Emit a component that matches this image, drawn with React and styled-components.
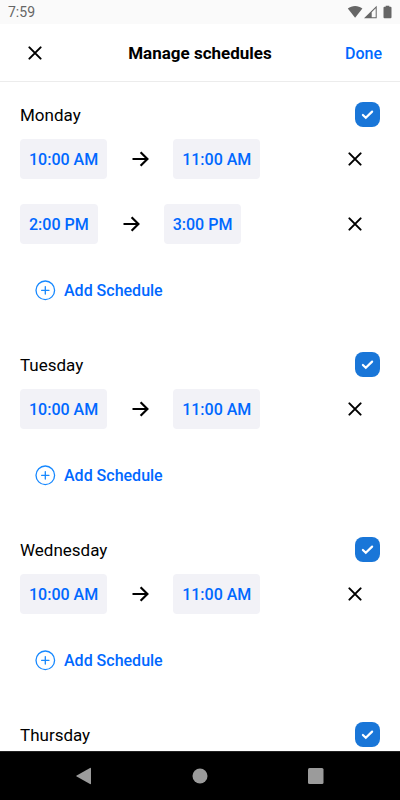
import React, { useState } from 'react';
import styled, { createGlobalStyle } from 'styled-components';


const GlobalStyle = createGlobalStyle`
    * {
        box-sizing: border-box;
    }
    body {
        margin: 0;
        background-color: #ffffff;
        font-family: Roboto, "Liberation Sans", sans-serif;
        color: #000000;
    }
    button {
        font-family: inherit;
        border: none;
        background: none;
        padding: 0;
        cursor: pointer;
    }
    svg {
        display: block;
    }
    `
const Screen = styled.div`
    height: 100vh;
    display: flex;
    flex-direction: column;
    `
const StatusBar = styled.div`
    flex: none;
    height: 24px;
    padding: 0 7px 0 8px;
    display: flex;
    align-items: center;
    justify-content: space-between;
    background-color: #fafafa;
    color: #666666;
    font-size: 14px;
    line-height: 28px;
    `
const Header = styled.header`
    flex: none;
    height: 58px;
    padding: 0 18px 0 24px;
    display: grid;
    grid-template-columns: 1fr auto 1fr;
    align-items: center;
    border-bottom: 1px solid #ececec;
    `
const Title = styled.h1`
    margin: 0;
    padding-right: 6px;
    font-size: 17px;
    font-weight: 700;
    line-height: 24px;
    `
const DoneButton = styled.button`
    justify-self: end;
    padding-top: 2px;
    color: #0068ff;
    font-size: 16px;
    font-weight: 500;
    line-height: 24px;
    `
const IconButton = styled.button`
    width: 22px;
    height: 24px;
    display: flex;
    align-items: center;
    justify-content: center;
    color: #000000;
    `
const DayList = styled.main`
    flex: 1;
    min-height: 0;
    padding-top: 20px;
    overflow-y: auto;
    scrollbar-width: none;
    `
const Day = styled.section`
    padding: 0 20px 41px;
    `
const DayLabel = styled.label`
    height: 25px;
    margin-bottom: 12px;
    display: flex;
    align-items: center;
    justify-content: space-between;
    font-size: 17px;
    line-height: 26px;
    `
const CheckBox = styled.span`
    display: grid;
    width: 25px;
    height: 25px;
    border-radius: 8px;
    background-color: ${props => props.$on ? '#1976d8' : '#f2f2f7'};
    color: #ffffff;

    > * {
        grid-area: 1 / 1;
        place-self: center;
    }
    `
const CheckInput = styled.input`
    appearance: none;
    width: 100%;
    height: 100%;
    margin: 0;
    border-radius: 8px;
    cursor: pointer;
    `
const Row = styled.div`
    height: 40px;
    margin-bottom: 25px;
    padding-right: 14px;
    display: flex;
    align-items: center;
    justify-content: space-between;
    `
const Range = styled.div`
    display: flex;
    align-items: center;
    gap: 24px;
    `
const TimeButton = styled.button`
    height: 40px;
    padding: 2px 9px 0;
    border-radius: 4px;
    background-color: #f2f2f7;
    color: #0068ff;
    font-size: 16px;
    font-weight: 500;
    line-height: 24px;
    white-space: nowrap;
    `
const AddButton = styled.button`
    height: 42px;
    margin-left: 15px;
    display: flex;
    align-items: center;
    gap: 8px;
    color: #0068ff;
    font-size: 16px;
    font-weight: 500;
    line-height: 24px;
    `
const AddText = styled.span`
    padding-top: 2px;
    `
const NavBar = styled.nav`
    flex: none;
    height: 49px;
    padding: 0 26px;
    display: grid;
    grid-template-columns: repeat(3, 1fr);
    justify-items: center;
    background-color: #000000;
    border-top: 1px solid #222222;
    color: #9b9b9b;
    `
const NavButton = styled.button`
    color: inherit;
    `


const schedules = [
    { day: 'Monday', times: [['10:00 AM', '11:00 AM'], ['2:00 PM', '3:00 PM']] },
    { day: 'Tuesday', times: [['10:00 AM', '11:00 AM']] },
    { day: 'Wednesday', times: [['10:00 AM', '11:00 AM']] },
    { day: 'Thursday', times: [] },
]

const CloseIcon = () => (
    <svg width="14" height="14" viewBox="0 0 14 14" fill="none" stroke="currentColor" strokeWidth="2" strokeLinecap="round">
        <path d="M1.4 1.4 12.6 12.6M12.6 1.4 1.4 12.6" />
    </svg>
)

const ArrowIcon = () => (
    <svg width="18" height="18" viewBox="0 0 18 18" fill="none" stroke="currentColor" strokeWidth="2.2">
        <path d="M1.5 9H16.5M9.6 2.2 16.4 9 9.6 15.8" />
    </svg>
)

const CheckIcon = () => (
    <svg width="13" height="10" viewBox="0 0 13 10" fill="none" stroke="currentColor" strokeWidth="2.2" strokeLinecap="round" pointerEvents="none">
        <path d="M1.9 5 4.8 7.8 11.1 1.6" />
    </svg>
)

const PlusIcon = () => (
    <svg width="21" height="21" viewBox="0 0 21 21" fill="none" stroke="#1688ff" strokeWidth="1.3" strokeLinecap="round">
        <circle cx="10.3" cy="10.3" r="9.3" />
        <path d="M10.3 6.6V14M6.6 10.3H14" />
    </svg>
)

const StatusIcons = () => (
    <svg width="46" height="14" viewBox="0 0 46 14" fill="currentColor">
        <path d="M0.8 3.6C5 0 11.2 0 15.4 3.6L8.1 12.8Z" />
        <path fillRule="evenodd" d="M29.7 0.7V13.3H17ZM28.7 3.2 24.7 7.2V12.3H28.7Z" />
        <path d="M38.7 1.8V0.8H42.3V1.8H43.5Q44.5 1.8 44.5 2.8V12.2Q44.5 13.2 43.5 13.2H37.5Q36.5 13.2 36.5 12.2V2.8Q36.5 1.8 37.5 1.8Z" />
    </svg>
)


const DaySection = ({ day, times }) => {
    const [on, setOn] = useState(true)

    return (
        <Day>
            <DayLabel>
                {day}
                <CheckBox $on={on}>
                    <CheckInput type="checkbox" checked={on} onChange={e => setOn(e.target.checked)} />
                    {on && <CheckIcon />}
                </CheckBox>
            </DayLabel>
            {times.map(([start, end]) => (
                <Row key={start}>
                    <Range>
                        <TimeButton>{start}</TimeButton>
                        <ArrowIcon />
                        <TimeButton>{end}</TimeButton>
                    </Range>
                    <IconButton aria-label="Remove"><CloseIcon /></IconButton>
                </Row>
            ))}
            {times.length > 0 && (
                <AddButton>
                    <PlusIcon />
                    <AddText>Add Schedule</AddText>
                </AddButton>
            )}
        </Day>
    )
}

export default function App() {
    return (
        <>
            <GlobalStyle />
            <Screen>
                <StatusBar>
                    <span>7:59</span>
                    <StatusIcons />
                </StatusBar>
                <Header>
                    <IconButton aria-label="Close"><CloseIcon /></IconButton>
                    <Title>Manage schedules</Title>
                    <DoneButton>Done</DoneButton>
                </Header>
                <DayList>
                    {schedules.map(item => <DaySection key={item.day} {...item} />)}
                </DayList>
                <NavBar>
                    <NavButton aria-label="Back">
                        <svg width="16" height="18" viewBox="0 0 16 18" fill="currentColor">
                            <path d="M14 1Q15 0.5 15 1.6V16.4Q15 17.5 14 17L0.7 9.6Q-0.3 9 0.7 8.4Z" />
                        </svg>
                    </NavButton>
                    <NavButton aria-label="Home">
                        <svg width="16" height="16" viewBox="0 0 16 16" fill="currentColor">
                            <circle cx="8" cy="8" r="7.5" />
                        </svg>
                    </NavButton>
                    <NavButton aria-label="Recent apps">
                        <svg width="16" height="16" viewBox="0 0 16 16" fill="currentColor">
                            <rect width="15.5" height="16" rx="1.5" />
                        </svg>
                    </NavButton>
                </NavBar>
            </Screen>
        </>
    )
}
